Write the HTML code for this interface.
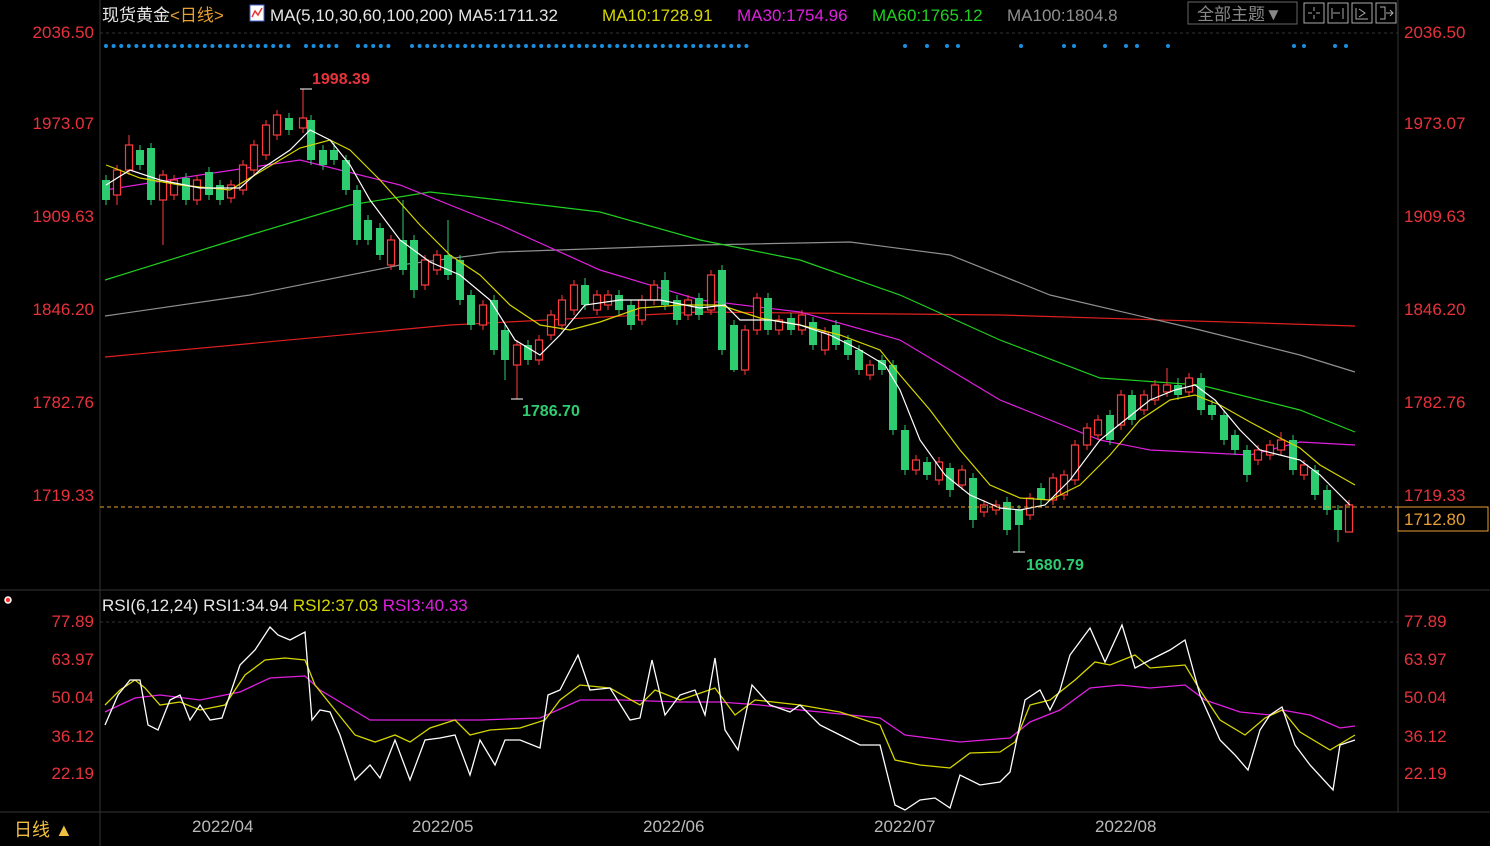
<!DOCTYPE html>
<html><head><meta charset="utf-8"><style>
html,body{margin:0;padding:0;background:#000;width:1490px;height:846px;overflow:hidden}
svg{display:block}
text{font-family:"Liberation Sans","Noto Sans CJK SC",sans-serif}
</style></head><body>
<svg width="1490" height="846" viewBox="0 0 1490 846" xmlns="http://www.w3.org/2000/svg">
<rect width="1490" height="846" fill="#000"/>
<g stroke="#333" stroke-width="1">
<line x1="100" y1="0" x2="100" y2="846"/>
<line x1="1398" y1="0" x2="1398" y2="812"/>
<line x1="0" y1="590" x2="1490" y2="590"/>
<line x1="0" y1="812" x2="1490" y2="812"/>
</g>
<line x1="100" y1="33" x2="1398" y2="33" stroke="#333" stroke-dasharray="3,3"/>
<line x1="100" y1="622" x2="1398" y2="622" stroke="#333" stroke-dasharray="3,3"/>
<g font-size="17" fill="#e8323c">
<text x="94" y="38" text-anchor="end">2036.50</text>
<text x="94" y="129" text-anchor="end">1973.07</text>
<text x="94" y="222" text-anchor="end">1909.63</text>
<text x="94" y="315" text-anchor="end">1846.20</text>
<text x="94" y="408" text-anchor="end">1782.76</text>
<text x="94" y="501" text-anchor="end">1719.33</text>
<text x="1404" y="38">2036.50</text>
<text x="1404" y="129">1973.07</text>
<text x="1404" y="222">1909.63</text>
<text x="1404" y="315">1846.20</text>
<text x="1404" y="408">1782.76</text>
<text x="1404" y="501">1719.33</text>
<text x="94" y="627" text-anchor="end">77.89</text>
<text x="94" y="665" text-anchor="end">63.97</text>
<text x="94" y="703" text-anchor="end">50.04</text>
<text x="94" y="742" text-anchor="end">36.12</text>
<text x="94" y="779" text-anchor="end">22.19</text>
<text x="1404" y="627">77.89</text>
<text x="1404" y="665">63.97</text>
<text x="1404" y="703">50.04</text>
<text x="1404" y="742">36.12</text>
<text x="1404" y="779">22.19</text>
</g>
<g font-size="17">
<text x="102" y="21" fill="#e6e6e6">现货黄金<tspan fill="#e8a030">&lt;日线&gt;</tspan></text>
<rect x="250" y="5" width="14" height="16" fill="#fff" stroke="#46c"/>
<polyline points="252,17 255,11 258,15 262,8" fill="none" stroke="#e33" stroke-width="1.5"/>
<text x="270" y="21" fill="#e6e6e6">MA(5,10,30,60,100,200) MA5:1711.32</text>
<text x="602" y="21" fill="#d6d600">MA10:1728.91</text>
<text x="737" y="21" fill="#e020e0">MA30:1754.96</text>
<text x="872" y="21" fill="#20d020">MA60:1765.12</text>
<text x="1007" y="21" fill="#909090">MA100:1804.8</text>
</g>
<rect x="1188" y="2" width="109" height="22" fill="#000" stroke="#666"/>
<text x="1197" y="20" font-size="17" fill="#888">全部主题▼</text>
<g fill="none" stroke="#aaa">
<rect x="1304" y="3" width="20" height="20"/><rect x="1328" y="3" width="20" height="20"/><rect x="1352" y="3" width="20" height="20"/><rect x="1376" y="3" width="20" height="20"/>
<path d="M1314 7v4M1314 15v4M1308 13h4M1316 13h4M1332 8v11M1333 13h7M1343 8v11M1356 8v11h12M1359 9l6 4-6 4M1380 7h5v12h-5M1386 13h7M1390 10l3 3-3 3"/>
</g>
<g stroke="#1a8fe0" stroke-width="4" stroke-linecap="round" stroke-dasharray="0,7.6">
<line x1="106" y1="46" x2="292" y2="46"/>
<line x1="306" y1="46" x2="342" y2="46"/>
<line x1="358" y1="46" x2="394" y2="46"/>
<line x1="412" y1="46" x2="752" y2="46"/>
</g>
<g fill="#1a8fe0">
<circle cx="905" cy="46" r="2"/><circle cx="927" cy="46" r="2"/><circle cx="947" cy="46" r="2"/><circle cx="958" cy="46" r="2"/><circle cx="1021" cy="46" r="2"/><circle cx="1064" cy="46" r="2"/><circle cx="1074" cy="46" r="2"/><circle cx="1105" cy="46" r="2"/><circle cx="1126" cy="46" r="2"/><circle cx="1137" cy="46" r="2"/><circle cx="1168" cy="46" r="2"/><circle cx="1294" cy="46" r="2"/><circle cx="1304" cy="46" r="2"/><circle cx="1335" cy="46" r="2"/><circle cx="1346" cy="46" r="2"/>
</g>
<g fill="none" stroke-width="1.2">
<polyline stroke="#e02020" points="105,357 450,325 700,312 1000,315 1355,326"/>
<polyline stroke="#909090" points="105,316 250,295 400,265 500,252 700,245 850,242 950,255 1050,295 1200,330 1300,355 1355,372"/>
<polyline stroke="#20d020" points="105,280 250,235 350,205 430,192 500,200 600,212 700,240 800,260 900,295 1000,340 1100,378 1200,385 1300,410 1355,432"/>
<polyline stroke="#e020e0" points="105,190 200,175 300,160 400,185 500,225 600,270 700,300 800,312 900,340 1000,400 1050,420 1100,440 1150,450 1250,455 1300,442 1355,445"/>
</g>
<!-- green candles -->
<path fill="none" stroke="#2ecc71" stroke-width="1" d="M106 175V205M140 145V170M151 143V205M186 173V205M209 167V200M220 180V205M289 113V135M311 115V165M323 145V170M334 143V165M346 155V195M357 185V245M368 215V245M380 223V260M403 200V275M414 235V298M448 220V280M460 255V305M471 290V330M494 295V355M505 325V380M528 340V365M585 278V310M619 290V315M631 300V330M665 272V310M677 295V325M699 293V320M722 265V355M734 320V372M768 293V335M791 313V335M813 317V350M836 320V350M848 335V360M859 345V375M882 355V375M893 360V435M905 425V475M927 457V480M950 463V497M973 473V528M1007 497V535M1019 505V552M1041 483V505M1110 410V445M1132 390V425M1178 378V400M1201 373V415M1212 400V420M1224 410V445M1235 430V455M1247 445V482M1293 435V475M1315 465V500M1327 485V515M1338 505V542"/>
<path fill="none" stroke="#2ecc71" stroke-width="8" d="M106 180V200M140 150V165M151 148V200M186 178V200M209 172V195M220 185V200M289 118V130M311 120V160M323 150V165M334 150V160M346 160V190M357 190V240M368 220V240M380 228V255M403 240V270M414 240V290M448 255V275M460 260V300M471 295V325M494 300V350M505 330V360M528 345V360M585 285V305M619 295V310M631 305V325M665 280V305M677 300V320M699 298V315M722 270V350M734 325V370M768 298V330M791 318V330M813 322V345M836 325V345M848 340V355M859 350V370M882 360V370M893 365V430M905 430V470M927 462V475M950 468V490M973 478V520M1007 502V530M1019 510V525M1041 488V500M1110 415V440M1132 395V420M1178 385V395M1201 378V410M1212 405V415M1224 415V440M1235 435V450M1247 450V475M1293 440V470M1315 470V495M1327 490V510M1338 510V530"/>
<!-- red candles -->
<g fill="#000" stroke="#ff3b3b" stroke-width="1.2">
<path fill="none" stroke-width="1" d="M117 165V205M129 135V175M163 170V245M174 175V200M197 175V205M231 180V203M243 160V195M254 140V175M266 120V160M277 110V140M303 89V133M391 235V270M425 255V290M437 250V275M483 300V330M517 340V399M539 335V365M551 310V340M562 295V330M574 280V315M597 290V315M608 290V310M642 295V325M654 280V305M688 295V320M711 270V315M745 325V375M757 293V335M779 315V335M802 310V335M825 327V355M870 360V380M916 455V475M939 457V485M962 465V490M984 500V517M996 500V515M1030 493V520M1053 473V505M1064 470V500M1075 440V485M1087 423V450M1098 415V440M1121 390V430M1144 390V415M1155 380V405M1167 368V397M1189 373V397M1258 445V465M1270 440V460M1281 432V455M1304 460V480M1349 500V532"/>
<rect x="113.5" y="170" width="7" height="25"/><rect x="125.5" y="145" width="7" height="25"/><rect x="159.5" y="175" width="7" height="25"/><rect x="170.5" y="180" width="7" height="15"/><rect x="193.5" y="180" width="7" height="20"/><rect x="227.5" y="185" width="7" height="13"/><rect x="239.5" y="165" width="7" height="25"/><rect x="250.5" y="145" width="7" height="25"/><rect x="262.5" y="125" width="7" height="30"/><rect x="273.5" y="115" width="7" height="20"/><rect x="299.5" y="118" width="7" height="10"/>
<rect x="387.5" y="240" width="7" height="25"/><rect x="421.5" y="260" width="7" height="25"/><rect x="433.5" y="255" width="7" height="15"/><rect x="479.5" y="305" width="7" height="20"/><rect x="513.5" y="345" width="7" height="20"/><rect x="535.5" y="340" width="7" height="20"/><rect x="547.5" y="315" width="7" height="20"/><rect x="558.5" y="300" width="7" height="25"/><rect x="570.5" y="285" width="7" height="25"/><rect x="593.5" y="295" width="7" height="15"/><rect x="604.5" y="295" width="7" height="10"/><rect x="638.5" y="300" width="7" height="20"/><rect x="650.5" y="285" width="7" height="15"/><rect x="684.5" y="300" width="7" height="15"/><rect x="707.5" y="275" width="7" height="35"/><rect x="741.5" y="330" width="7" height="40"/><rect x="753.5" y="298" width="7" height="32"/><rect x="775.5" y="320" width="7" height="10"/><rect x="798.5" y="315" width="7" height="15"/><rect x="821.5" y="332" width="7" height="18"/><rect x="866.5" y="365" width="7" height="10"/>
<rect x="912.5" y="460" width="7" height="10"/><rect x="935.5" y="462" width="7" height="18"/><rect x="958.5" y="470" width="7" height="15"/><rect x="980.5" y="505" width="7" height="7"/><rect x="992.5" y="505" width="7" height="5"/><rect x="1026.5" y="498" width="7" height="17"/><rect x="1049.5" y="478" width="7" height="22"/><rect x="1060.5" y="475" width="7" height="20"/><rect x="1071.5" y="445" width="7" height="35"/><rect x="1083.5" y="428" width="7" height="17"/><rect x="1094.5" y="420" width="7" height="15"/><rect x="1117.5" y="395" width="7" height="30"/><rect x="1140.5" y="395" width="7" height="15"/><rect x="1151.5" y="385" width="7" height="15"/><rect x="1163.5" y="385" width="7" height="7"/><rect x="1185.5" y="378" width="7" height="14"/><rect x="1254.5" y="450" width="7" height="10"/><rect x="1266.5" y="445" width="7" height="10"/><rect x="1277.5" y="440" width="7" height="10"/><rect x="1300.5" y="465" width="7" height="10"/><rect x="1345.5" y="505" width="7" height="27"/>
</g>
<g fill="none" stroke-width="1.2">
<polyline stroke="#d6d600" points="106,165 140,178 180,185 230,190 260,172 300,148 330,140 350,150 380,180 420,225 450,255 480,275 510,305 540,325 570,330 600,322 640,308 680,305 720,305 760,318 800,325 840,335 880,350 900,375 930,410 960,450 990,485 1020,498 1050,500 1080,485 1110,455 1140,420 1170,400 1195,395 1220,405 1250,422 1280,438 1300,448 1320,465 1355,485"/>
<polyline stroke="#ffffff" points="106,185 130,170 160,180 200,188 240,188 260,170 290,150 310,130 330,140 350,165 370,200 400,240 430,262 460,275 490,300 515,340 540,355 560,335 585,305 620,300 660,300 700,308 725,305 740,320 770,320 800,325 830,335 860,350 885,365 900,390 920,440 945,475 970,495 1000,508 1020,510 1045,505 1070,480 1100,440 1125,420 1150,400 1175,390 1195,385 1215,400 1240,430 1260,450 1280,455 1300,460 1320,475 1340,495 1350,505"/>
</g>
<line x1="300" y1="89" x2="312" y2="89" stroke="#fff"/>
<line x1="511" y1="399" x2="523" y2="399" stroke="#fff"/>
<line x1="1013" y1="552" x2="1025" y2="552" stroke="#fff"/>
<line x1="100" y1="507" x2="1398" y2="507" stroke="#e8a030" stroke-dasharray="4,3"/>
<rect x="1398" y="507" width="90" height="24" fill="#000" stroke="#e8a030"/>
<text x="1404" y="525" font-size="17" fill="#e8a030">1712.80</text>
<g font-size="16" font-weight="bold">
<text x="312" y="84" fill="#e8323c">1998.39</text>
<text x="522" y="416" fill="#2ecc71">1786.70</text>
<text x="1026" y="570" fill="#2ecc71">1680.79</text>
</g>
<circle cx="8" cy="600" r="3" fill="#f33" stroke="#fff" stroke-width="1.5"/>
<text x="102" y="611" font-size="17" fill="#e6e6e6">RSI(6,12,24) RSI1:34.94 <tspan fill="#d6d600">RSI2:37.03</tspan> <tspan fill="#e020e0">RSI3:40.33</tspan></text>
<g fill="none" stroke-width="1.3">
<polyline stroke="#e020e0" points="105,712 135,698 160,695 200,700 240,692 270,678 305,676 320,690 345,705 370,720 420,720 480,720 540,718 580,700 620,700 680,702 720,702 760,705 800,710 880,718 905,735 960,742 1010,738 1030,722 1060,710 1090,688 1120,685 1150,688 1185,685 1205,700 1240,712 1270,715 1282,710 1310,715 1340,728 1355,726"/>
<polyline stroke="#d6d600" points="105,705 120,690 135,680 145,688 160,705 180,702 200,710 225,705 245,675 265,660 285,658 305,660 315,685 335,710 355,735 375,742 395,735 410,742 430,728 455,720 470,735 490,730 520,728 545,720 560,700 580,685 610,688 640,705 655,690 680,700 715,688 735,715 755,700 800,705 840,712 880,725 895,760 920,765 950,768 970,753 1000,752 1015,742 1030,705 1050,700 1075,680 1095,662 1110,665 1135,655 1150,668 1185,665 1200,690 1220,720 1245,735 1265,718 1282,710 1300,732 1330,750 1355,735"/>
<polyline stroke="#ffffff" points="105,725 118,695 130,680 140,680 148,725 158,730 170,700 180,695 190,720 200,705 210,720 222,718 240,665 255,650 270,627 278,635 290,640 305,632 312,720 320,710 330,712 340,735 355,780 370,765 380,778 395,740 410,780 425,740 440,738 455,735 470,775 480,740 495,765 505,740 520,740 540,748 548,695 560,690 578,655 590,690 610,688 630,720 640,718 652,660 665,715 680,695 695,690 705,715 715,658 725,730 738,750 752,685 770,705 790,712 800,705 820,725 840,735 860,745 880,745 895,805 905,810 920,800 935,798 950,808 960,775 980,785 1000,782 1010,772 1025,700 1040,690 1050,710 1060,690 1070,655 1090,628 1105,662 1122,625 1135,668 1150,660 1170,650 1185,640 1200,695 1220,740 1235,755 1248,770 1260,730 1270,715 1282,707 1295,745 1310,765 1333,790 1340,745 1355,740"/>
</g>
<text x="14" y="836" font-size="18" fill="#f0c040">日线 ▲</text>
<g font-size="17" fill="#bbb">
<text x="192" y="832">2022/04</text>
<text x="412" y="832">2022/05</text>
<text x="643" y="832">2022/06</text>
<text x="874" y="832">2022/07</text>
<text x="1095" y="832">2022/08</text>
</g>
</svg>
</body></html>
